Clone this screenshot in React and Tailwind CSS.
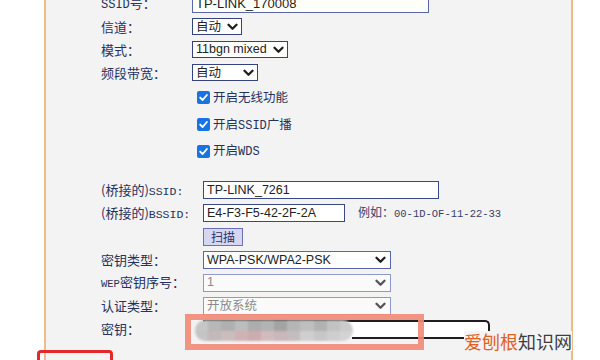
import React from "react";

function Chevron({ c = "#1f1f1f" }) {
  return (
    <svg width="11" height="8" viewBox="0 0 11 8">
      <path d="M1.5 1.8 L5.5 5.8 L9.5 1.8" fill="none" stroke={c} strokeWidth="2.3" strokeLinecap="round" strokeLinejoin="round" />
    </svg>
  );
}

function Check() {
  return (
    <span className="w-[13px] h-[13px] shrink-0 rounded-[2px] bg-[#1a73e3] flex items-center justify-center">
      <svg width="11" height="11" viewBox="0 0 11 11">
        <path d="M2.2 5.6 L4.6 8 L8.9 3" stroke="white" strokeWidth="1.9" fill="none" strokeLinecap="round" strokeLinejoin="round" />
      </svg>
    </span>
  );
}

const top = [
  "#c6c6c6", "#b8b8b8", "#b0b0b0", "#bdbdbd", "#adadad", "#b3b3b3", "#a3a3a3", "#b6b6b6", "#bfbfbf", "#b2b2b2", "#c2c2c2", "#cbcbcb",
];
const bot = [
  "#c4c4c4", "#c2b9ba", "#cbbdbe", "#d0b2b5", "#cbadb1", "#d2bbbd", "#c9b7b9", "#c5bdbd", "#cfcfcf", "#c7c7c7", "#cecece", "#d3d3d3",
];

export default function App() {
  const cjk = "font-['Noto_Sans_CJK_SC',sans-serif]";
  return (
    <div className="relative w-[600px] h-[360px] overflow-hidden bg-white flex">
      <div className="w-[44px] shrink-0 bg-white" />
      <div className="w-[2px] shrink-0 bg-[#f1ba88]" />
      <div className="w-[525px] shrink-0 bg-[#f3f3f3] pl-[55px]">
        <div className="-mt-[8px] flex flex-col text-[#27315e]">
          {/* SSID */}
          <div className="h-[23px] flex items-center">
            <div className={`w-[91px] shrink-0 text-[13px] ${cjk}`}>
              <span className="font-['Liberation_Mono',monospace] text-[12px]">SSID</span>号：
            </div>
            <div className="w-[237px] h-[19px] bg-[#fffffa] border-[1.5px] border-[#5b66a6] pl-[3px] flex items-center text-[13px] text-[#222] font-['Liberation_Sans',sans-serif]">
              TP-LINK_170008
            </div>
          </div>
          {/* 信道 */}
          <div className="h-[23px] flex items-center">
            <div className={`w-[91px] shrink-0 text-[13px] ${cjk}`}>信道：</div>
            <div className={`w-[50px] h-[17px] bg-white border-[1.5px] border-[#34427e] pl-[3px] pr-[3px] flex items-center justify-between text-[12.5px] text-[#222] ${cjk}`}>
              <span>自动</span>
              <Chevron />
            </div>
          </div>
          {/* 模式 */}
          <div className="h-[23px] flex items-center">
            <div className={`w-[91px] shrink-0 text-[13px] ${cjk}`}>模式：</div>
            <div className="w-[96px] h-[17px] bg-white border-[1.5px] border-[#34427e] pl-[3px] pr-[3px] flex items-center justify-between text-[12.5px] text-[#222] font-['Liberation_Sans',sans-serif]">
              <span>11bgn mixed</span>
              <Chevron />
            </div>
          </div>
          {/* 频段带宽 */}
          <div className="h-[23px] flex items-center">
            <div className={`w-[91px] shrink-0 text-[13px] ${cjk}`}>频段带宽：</div>
            <div className={`w-[66px] h-[17px] bg-white border-[1.5px] border-[#34427e] pl-[3px] pr-[3px] flex items-center justify-between text-[12.5px] text-[#222] ${cjk}`}>
              <span>自动</span>
              <Chevron />
            </div>
          </div>
          {/* checkboxes */}
          <div className={`h-[27px] flex items-center pl-[96px] gap-[3px] text-[12.5px] ${cjk}`}>
            <Check />
            <span>开启无线功能</span>
          </div>
          <div className={`h-[27px] flex items-center pl-[96px] gap-[3px] text-[12.5px] ${cjk}`}>
            <Check />
            <span>
              开启<span className="font-['Liberation_Mono',monospace] text-[12px]">SSID</span>广播
            </span>
          </div>
          <div className={`h-[26px] flex items-center pl-[96px] gap-[3px] text-[12.5px] ${cjk}`}>
            <Check />
            <span>
              开启<span className="font-['Liberation_Mono',monospace] text-[12px]">WDS</span>
            </span>
          </div>
          <div className="h-[15px]" />
          {/* bridge SSID */}
          <div className="h-[22px] flex items-center">
            <div className={`w-[102px] shrink-0 text-[13px] ${cjk}`}>
              (桥接的)<span className="font-['Liberation_Mono',monospace] text-[11.5px]">SSID:</span>
            </div>
            <div className="w-[236px] h-[18px] bg-white border-[1.5px] border-[#3a4785] pl-[3px] flex items-center text-[12.5px] text-[#222] font-['Liberation_Sans',sans-serif]">
              TP-LINK_7261
            </div>
          </div>
          {/* bridge BSSID */}
          <div className="h-[24px] flex items-center">
            <div className={`w-[102px] shrink-0 text-[13px] ${cjk}`}>
              (桥接的)<span className="font-['Liberation_Mono',monospace] text-[11.5px]">BSSID:</span>
            </div>
            <div className="w-[142px] h-[18px] bg-white border-[1.5px] border-[#3a4785] pl-[3px] flex items-center text-[12.5px] text-[#222] font-['Liberation_Sans',sans-serif]">
              E4-F3-F5-42-2F-2A
            </div>
            <div className={`ml-[13px] text-[12px] text-[#33406a] ${cjk}`}>
              例如：<span className="font-['Liberation_Mono',monospace] text-[10.5px]">00-1D-OF-11-22-33</span>
            </div>
          </div>
          {/* scan button */}
          <div className="h-[24px] flex items-center pl-[102px]">
            <div className={`w-[40px] h-[18px] bg-[#d6d6f3] border border-[#6b71b3] flex items-center justify-center text-[12px] text-[#2a3463] ${cjk}`}>
              扫描
            </div>
          </div>
          {/* 密钥类型 */}
          <div className="h-[22px] flex items-center">
            <div className={`w-[102px] shrink-0 text-[13px] ${cjk}`}>密钥类型：</div>
            <div className="w-[188px] h-[18px] bg-white border-[1.5px] border-[#5966ad] pl-[3px] pr-[4px] flex items-center justify-between text-[12.5px] text-[#222] font-['Liberation_Sans',sans-serif]">
              <span>WPA-PSK/WPA2-PSK</span>
              <Chevron />
            </div>
          </div>
          {/* WEP */}
          <div className="h-[23px] flex items-center">
            <div className={`w-[102px] shrink-0 text-[13px] ${cjk}`}>
              <span className="font-['Liberation_Mono',monospace] text-[10.5px]">WEP</span>密钥序号：
            </div>
            <div className="w-[188px] h-[18px] bg-[#fafafa] border-[1.5px] border-[#8e98cb] pl-[3px] pr-[4px] flex items-center justify-between text-[12.5px] text-[#8a8a8a] font-['Liberation_Sans',sans-serif]">
              <span>1</span>
              <Chevron c="#555" />
            </div>
          </div>
          {/* 认证类型 */}
          <div className="h-[23px] flex items-center">
            <div className={`w-[102px] shrink-0 text-[13px] ${cjk}`}>认证类型：</div>
            <div className={`w-[188px] h-[18px] bg-[#fafafa] border-[1.5px] border-[#8e98cb] pl-[3px] pr-[4px] flex items-center justify-between text-[12.5px] text-[#8a8a8a] ${cjk}`}>
              <span>开放系统</span>
              <Chevron c="#555" />
            </div>
          </div>
          {/* 密钥 */}
          <div className="h-[23px] flex items-center">
            <div className={`w-[102px] shrink-0 text-[13px] ${cjk}`}>密钥：</div>
            <div className="w-[287px] h-[18px] bg-white border-t-2 border-r-2 border-[#1e1e1e] rounded-tr-[5px]" />
          </div>
        </div>
      </div>
      <div className="w-[2px] shrink-0 bg-[#f1ba88]" />
      <div className="flex-1 bg-white" />

      {/* blurred password */}
      <div className="absolute left-[195px] top-[320px] w-[158px] h-[21px] rounded-full overflow-hidden flex flex-col blur-[1px]">
        <div className="flex h-[11px]">
          {top.map((c, i) => (
            <div key={i} className="flex-1" style={{ backgroundColor: c }} />
          ))}
        </div>
        <div className="flex h-[10px]">
          {bot.map((c, i) => (
            <div key={i} className="flex-1" style={{ backgroundColor: c }} />
          ))}
        </div>
      </div>

      {/* callout line */}
      <div className="absolute left-[352px] top-[337px] w-[114px] h-[2px] bg-[#1e1e1e]" />

      {/* red highlight */}
      <div className="absolute left-[185px] top-[314px] w-[239px] h-[36px] border-[6px] border-[#f28a78] opacity-90 blur-[0.6px]" />

      {/* watermark */}
      <div className="absolute left-[464px] top-[331px] h-[20px] leading-[20px] text-[18px] bg-[#f3f3f3] font-['Noto_Sans_CJK_SC',sans-serif]">
        <span className="text-[#e2611c]">爱刨根</span>
        <span className="text-[#3d3d3d]">知识网</span>
      </div>

      {/* bottom-left red box */}
      <div className="absolute left-[37px] top-[350px] w-[76px] h-[20px] border-[3px] border-[#e3282b] rounded-[4px]" />
    </div>
  );
}
